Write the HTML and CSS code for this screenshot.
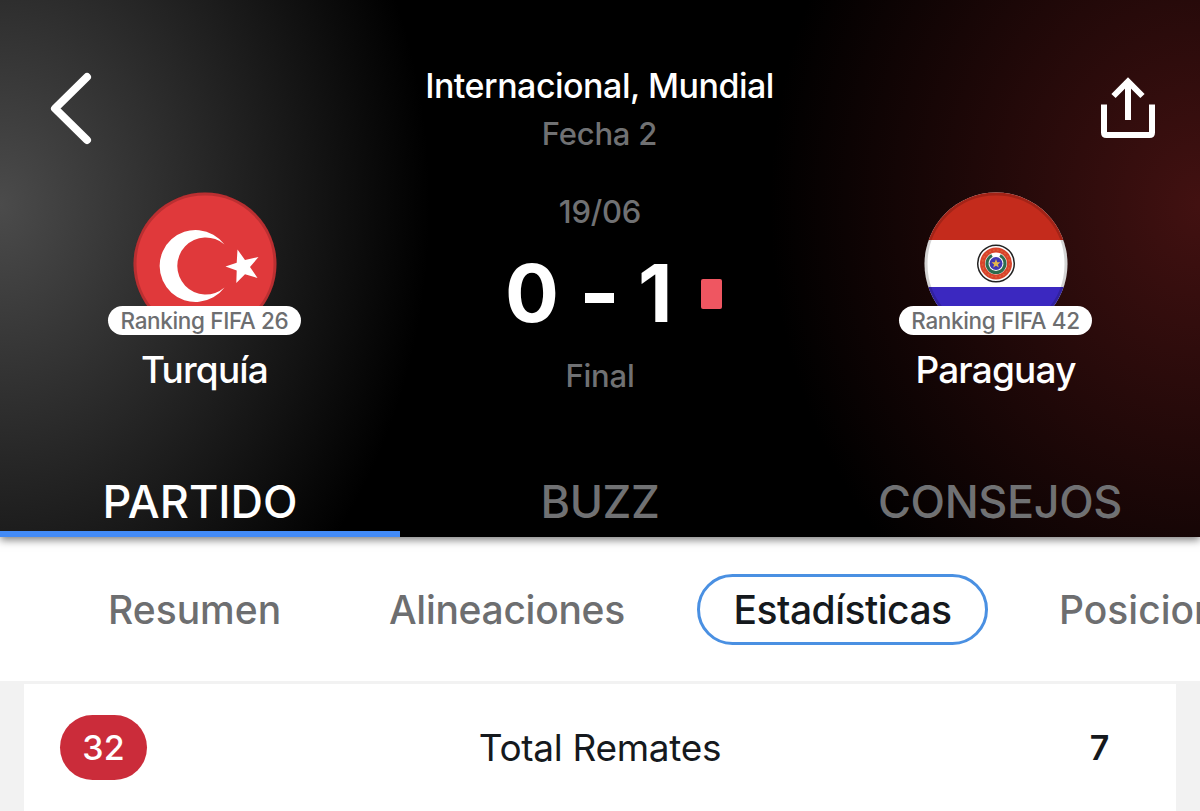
FILE: index.html
```html
<!DOCTYPE html>
<html lang="es">
<head>
    <meta charset="UTF-8">
    <title>Turquía - Paraguay</title>
    <link rel="stylesheet" href="styles.css">
</head>
<body>
    <header class="header">
        <div class="top-bar">
            <svg class="back-icon" viewBox="0 0 48 80">
                <path d="M39 9 7 40.500 39 72" fill="none" stroke="#fff" stroke-width="8" stroke-linecap="round" stroke-linejoin="round"/>
            </svg>
            <div class="competition">
                <div class="competition-name">Internacional, Mundial</div>
                <div class="round">Fecha 2</div>
            </div>
            <svg class="share-icon" viewBox="0 0 54 62">
                <path d="M3 27.500V55.500Q3 58 5.500 58H48.500Q51 58 51 55.500V27.500" fill="none" stroke="#fff" stroke-width="6"/>
                <path d="M27 43V5M12.500 19 27 4.500 41.500 19" fill="none" stroke="#fff" stroke-width="6"/>
            </svg>
        </div>

        <div class="match">
            <div class="team">
                <svg class="flag" viewBox="0 0 144 130">
                    <circle cx="72" cy="72" r="71.500" fill="#e0393b"/>
                    <path d="M91.500 52.500A36 36 0 1 0 91.500 95.500A28.500 28.500 0 1 1 91.500 52.500Z" fill="#fff"/>
                    <path d="M92.500 74.500 103.700 70.700 104.500 57.500 112 68 125.500 65 117 75 124.500 86 112 82.300 103.300 91 103.700 78.500Z" fill="#fff"/>
                    <circle cx="72" cy="72" r="70" fill="none" stroke="#000" stroke-opacity=".17" stroke-width="3"/>
                </svg>
                <div class="ranking">Ranking FIFA 26</div>
                <div class="team-name">Turquía</div>
            </div>

            <div class="result">
                <div class="date">19/06</div>
                <div class="score">
                    <span class="goals">0</span>
                    <span class="dash"></span>
                    <span class="goals">1</span>
                    <span class="red-card"></span>
                </div>
                <div class="status">Final</div>
            </div>

            <div class="team">
                <svg class="flag" viewBox="0 0 144 130">
                    <clipPath id="round"><circle cx="72" cy="72" r="71.500"/></clipPath>
                    <g clip-path="url(#round)">
                        <rect width="144" height="144" fill="#fff"/>
                        <rect width="144" height="48" fill="#c42b1c"/>
                        <rect y="95" width="144" height="49" fill="#3b28c0"/>
                    </g>
                    <circle cx="72" cy="71.500" r="18.300" fill="#fff" stroke="#222" stroke-width="1.500"/>
                    <circle cx="72" cy="71.500" r="13.500" fill="none" stroke="#d9432b" stroke-width="5"/>
                    <circle cx="72" cy="71.500" r="13.500" fill="none" stroke="#dc6238" stroke-width="1.500" stroke-dasharray="2 2"/>
                    <path d="M68 63.500A9 9 0 1 0 76 63.500" fill="none" stroke="#2f6b4d" stroke-width="3"/>
                    <circle cx="72" cy="71.500" r="6.500" fill="#4038b4"/>
                    <path d="M72 67 73.200 70.200 76.500 70.300 73.900 72.400 74.800 75.500 72 73.700 69.200 75.500 70.100 72.400 67.500 70.300 70.800 70.200Z" fill="#e5b84b"/>
                    <circle cx="72" cy="72" r="70" fill="none" stroke="#000" stroke-opacity=".17" stroke-width="3"/>
                </svg>
                <div class="ranking">Ranking FIFA 42</div>
                <div class="team-name">Paraguay</div>
            </div>
        </div>

        <nav class="tabs">
            <a class="tab active">PARTIDO</a>
            <a class="tab">BUZZ</a>
            <a class="tab">CONSEJOS</a>
        </nav>
    </header>

    <nav class="sub-tabs">
        <a class="resumen">Resumen</a>
        <a class="alineaciones">Alineaciones</a>
        <a class="selected">Estadísticas</a>
        <a>Posiciones</a>
    </nav>

    <main class="stats">
        <div class="stat-row">
            <div class="value home">32</div>
            <div class="stat-name">Total Remates</div>
            <div class="value">7</div>
        </div>
    </main>
</body>
</html>
```
FILE: styles.css
```css
* {
    box-sizing: border-box;
}

body {
    margin: 0;
    height: 811px;
    display: flex;
    flex-direction: column;
    overflow: hidden;
    background: #f2f2f2;
    font-family: Inter, "Liberation Sans", sans-serif;
    color: #15191d;
}

.header {
    height: 537px;
    flex: none;
    z-index: 1;
    position: relative;
    background:
        radial-gradient(ellipse 430px 530px at 0 205px, #4b4b4b, rgba(0, 0, 0, 0)),
        radial-gradient(ellipse 430px 500px at 1200px 205px, #421111, rgba(0, 0, 0, 0)),
        #000;
    box-shadow: 0 3px 8px rgba(0, 0, 0, .5);
}

.top-bar {
    display: flex;
    justify-content: space-between;
    height: 192px;
    padding: 62px 45px 0 48px;
}

.back-icon {
    width: 48px;
    height: 80px;
    margin-top: 6px;
}

.share-icon {
    width: 54px;
    height: 62px;
    margin-top: 15px;
}

.competition {
    text-align: center;
    margin-left: 2px;
}

.competition-name {
    font-size: 34px;
    line-height: 48px;
    font-weight: 500;
    color: #fff;
    letter-spacing: -.5px;
}

.round,
.date,
.status {
    font-size: 31px;
    line-height: 48px;
    font-weight: 450;
    letter-spacing: -.2px;
    color: #707173;
}

.match {
    display: flex;
    justify-content: space-between;
    height: 280px;
    padding: 0 108px;
}

.team {
    display: flex;
    flex-direction: column;
    align-items: center;
    width: 193px;
}

.flag {
    width: 144px;
    height: 130px;
    margin-bottom: -16px;
}

.ranking {
    position: relative;
    width: 193px;
    height: 29px;
    border-radius: 15px;
    background: #fff;
    color: #6d6e70;
    font-size: 22.500px;
    line-height: 29px;
    font-weight: 450;
    letter-spacing: -.35px;
    text-align: center;
    white-space: nowrap;
}

.team-name {
    margin-top: 11px;
    font-size: 37px;
    line-height: 48px;
    font-weight: 500;
    letter-spacing: -.8px;
    color: #fff;
}

.result {
    display: flex;
    flex-direction: column;
    align-items: center;
}

.date {
    margin-top: -4px;
}

.score {
    display: flex;
    align-items: center;
    height: 116px;
    width: 244px;
    padding-left: 27px;
    font-size: 80px;
    line-height: 112px;
    font-weight: 700;
    color: #fff;
}

.goals {
    margin-top: -2px;
}

.dash {
    width: 29px;
    height: 10px;
    margin: 8px 24px 0 26px;
    background: #fff;
}

.red-card {
    width: 21px;
    height: 30px;
    margin-left: auto;
    border-radius: 2px;
    background: #ef5661;
}

.tabs {
    display: grid;
    grid-template-columns: repeat(3, 1fr);
    height: 65px;
}

.tab {
    padding-top: 2px;
    border-bottom: 6px solid transparent;
    font-size: 45px;
    line-height: 56px;
    font-weight: 450;
    letter-spacing: -.4px;
    text-align: center;
    color: #707173;
}

.tab.active {
    color: #fff;
    border-color: #438bf7;
    letter-spacing: 0;
}

.sub-tabs {
    display: flex;
    align-items: center;
    flex: none;
    height: 144px;
    padding-left: 108px;
    background: #fff;
    font-size: 39px;
    font-weight: 450;
    line-height: 65px;
    color: #6d6e70;
    white-space: nowrap;
}

.sub-tabs a {
    flex: none;
}

.resumen {
    width: 281px;
}

.alineaciones {
    width: 308px;
    letter-spacing: -.3px;
}

.sub-tabs .selected {
    width: 291px;
    height: 71px;
    margin-right: 71px;
    border: 3px solid #4a90e2;
    border-radius: 36px;
    text-align: center;
    font-weight: 500;
    letter-spacing: -.5px;
    color: #15191d;
}

.stats {
    flex: 1;
    padding: 3px 24px 0;
}

.stat-row {
    display: grid;
    grid-template-columns: 87px 1fr 87px;
    align-items: center;
    height: 127px;
    padding: 0 33px 0 36px;
    background: #fff;
    text-align: center;
}

.stat-name {
    font-size: 37px;
    line-height: 61px;
    padding-right: 3px;
    letter-spacing: -.3px;
}

.value {
    height: 65px;
    font-size: 34px;
    line-height: 65px;
    font-weight: 600;
}

.value.home {
    border-radius: 33px;
    background: #cb2c3a;
    color: #fff;
    font-weight: 500;
}
```
